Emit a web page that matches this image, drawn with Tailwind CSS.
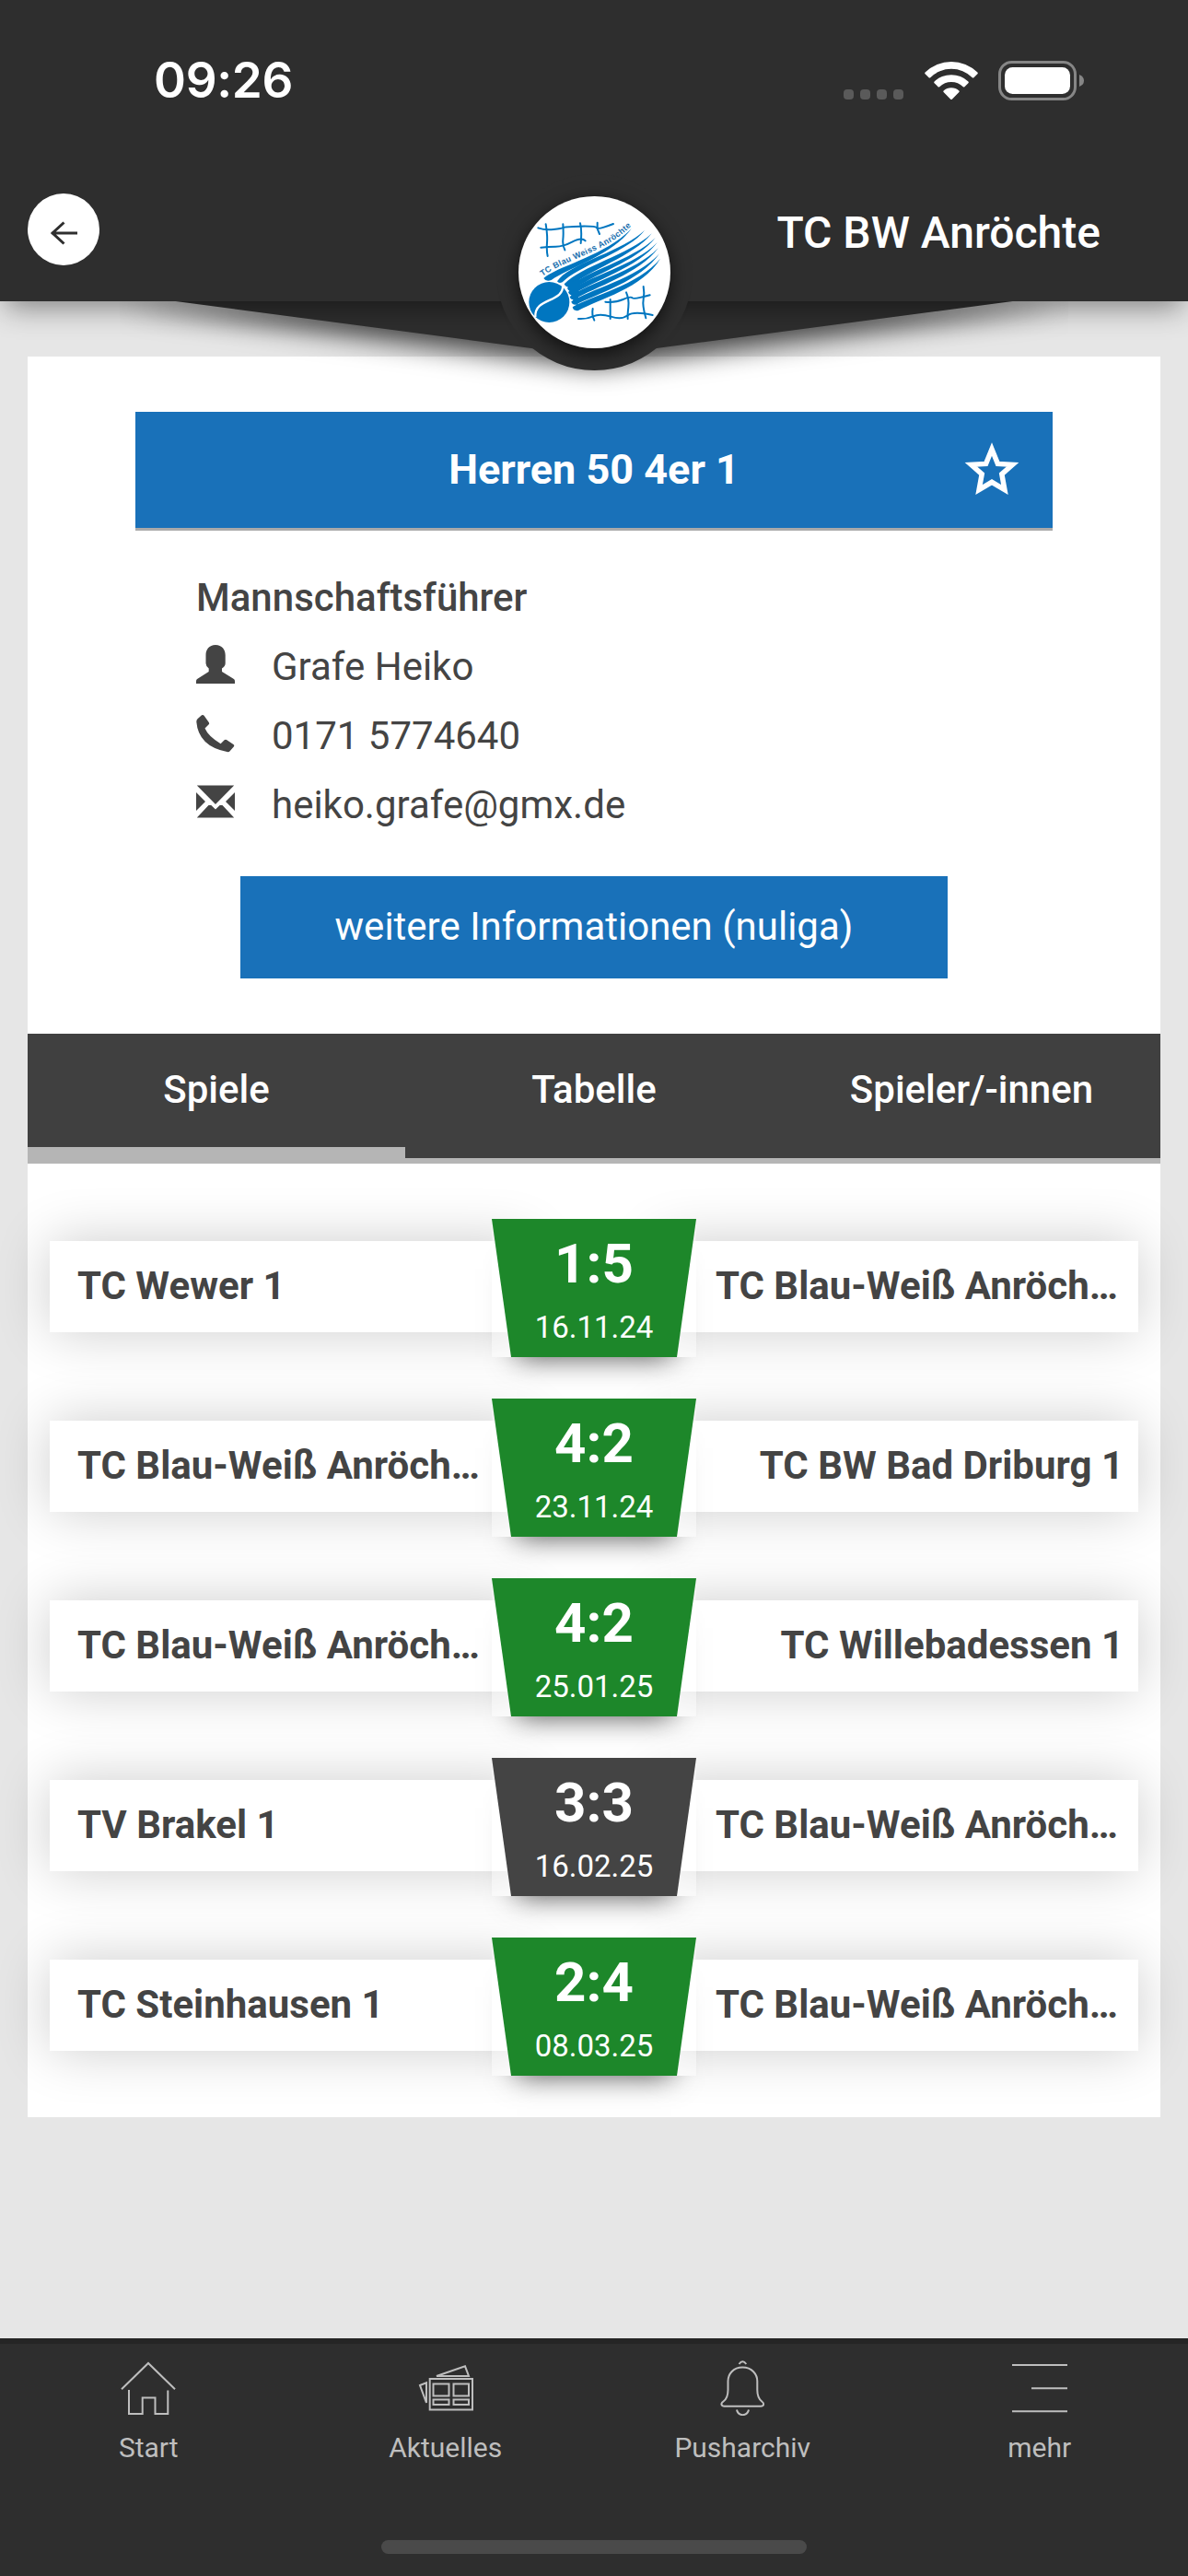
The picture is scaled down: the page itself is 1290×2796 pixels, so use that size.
<!DOCTYPE html>
<html lang="de">
<head>
  <meta charset="UTF-8" />
  <meta name="viewport" content="width=device-width, initial-scale=1.0"/>
  <title>TC BW Anröchte - Herren 50 4er 1</title>
  <script src="https://cdn.jsdelivr.net/npm/@tailwindcss/browser@4"></script>
</head>
<body class="w-[1290px] h-[2796px] overflow-hidden bg-[#e6e6e6] font-[Roboto,sans-serif] text-[42px] text-[#444444] flex flex-col">

  <!-- Header -->
  <div class="relative h-[327px] shrink-0 z-10">
    <svg class="absolute left-[130px] top-[310px] w-[1030px] h-[120px]" viewBox="130 310 1030 120">
      <polygon points="130,319 1160,319 645,387" fill="#2e2e2e" class="drop-shadow-[0_12px_14px_rgba(0,0,0,0.7)]"/>
    </svg>

    <header class="relative h-full bg-[#2e2e2e] shadow-[0_12px_30px_-6px_rgba(0,0,0,0.45)] text-white">
      <div class="h-[174px] pl-[167px] pr-[113px] flex items-center justify-between">
        <span class="font-[Inter,sans-serif] font-semibold text-[53px] leading-none tracking-[-0.3px]">09:26</span>
        <div class="flex items-center h-[43px]">
          <div class="flex gap-[7px] self-end mb-px mr-[23px]">
            <i class="size-[11px] rounded-[4px] bg-[#5a5a5a]"></i>
            <i class="size-[11px] rounded-[4px] bg-[#5a5a5a]"></i>
            <i class="size-[11px] rounded-[4px] bg-[#5a5a5a]"></i>
            <i class="size-[11px] rounded-[4px] bg-[#5a5a5a]"></i>
          </div>
          <svg class="w-[58px] h-[43px] mr-[22px]" viewBox="0 0 58 43" fill="#fff">
            <path d="M.6 12.6a40.5 40.5 0 0 1 56.8 0q.8.8 0 1.6l-4 4q-.8.8-1.6 0a32.300 32.300 0 0 0-45.600 0q-.8.8-1.600 0l-4-4q-.8-.8 0-1.600z"/>
            <path d="M10.600 22.600a26.500 26.500 0 0 1 36.800 0q.8.8 0 1.600l-4 4q-.8.8-1.600 0a18.500 18.500 0 0 0-25.600 0q-.8.8-1.600 0l-4-4q-.8-.8 0-1.600z"/>
            <path d="M20.600 32.400a12.500 12.500 0 0 1 16.800 0q.8.8 0 1.600l-7.600 7.700q-.8.8-1.600 0l-7.600-7.700q-.8-.8 0-1.600z"/>
          </svg>
          <svg class="w-[93px] h-[43px]" viewBox="0 0 93 43">
            <rect x="1.500" y="1.500" width="82" height="40" rx="13" fill="none" stroke="#868686" stroke-width="3"/>
            <rect x="7" y="7" width="71" height="29" rx="8.500" fill="#fff"/>
            <path d="M88 15q5 2 5 6.500t-5 6.500z" fill="#868686"/>
          </svg>
        </div>
      </div>
      <div class="mt-[35px] h-[84px] pl-[30px] pr-[95px] flex justify-between items-center">
        <div class="size-[78px] mb-1 rounded-full bg-white flex items-center justify-center">
          <svg class="size-[30px] mt-[7px] mr-px" viewBox="0 0 30 30" fill="none" stroke="#2e2e2e" stroke-width="3">
            <path d="M30 15H2M15.500 3.500 3 15l12.500 11.500"/>
          </svg>
        </div>
        <h1 class="font-medium text-[48px] leading-none mt-[3px]">TC BW Anröchte</h1>
      </div>
    </header>

    <!-- Club logo -->
    <div class="absolute left-[539px] top-[189px] size-[213px] rounded-full bg-[#2e2e2e] flex items-center justify-center">
      <svg class="size-[165px] rounded-full bg-white shadow-[0_6px_20px_0_rgba(0,0,0,0.65)]" viewBox="69 39 495 495">
        <g fill="none" stroke="#0076c0" stroke-width="6" stroke-linecap="round">
          <path d="M133 142Q155 150 183 147T215 141 270 137 325 142 378 129"/>
          <path d="M142 206Q165 203 190 203T245 187 287 184"/>
          <path d="M158 130Q164 165 162 190T164 234M214 130Q216 160 214 180T220 214M270 127Q276 150 272 192M326 125V145L333 162"/>
          <path d="M264 438Q290 440 312 430T370 431 425 427 506 426"/>
          <path d="M352 383Q385 386 410 375T440 370 497 361"/>
          <path d="M311 405Q307 425 316 443M368 375V438M420 352Q430 375 427 400T425 438M476 333Q480 355 476 375T484 436"/>
        </g>
        <!-- ball trail -->
        <g fill="#0076c0">
          <path d="M151 306C200 264 345 236 437 145C370 234 235 270 176 312Q158 318 151 306z"/>
          <path d="M195 316C235 256 400 224 480 150C425 222 265 264 212 319Q200 324 195 316z"/>
          <path d="M218 325C275 265 430 230 503 160C445 234 300 278 236 334Q222 336 218 325z"/>
          <path d="M228 338C285 283 440 248 515 174C455 252 305 295 243 347Q231 349 228 338z"/>
          <path d="M231 351C290 301 450 265 521 190C462 270 310 315 246 360Q234 362 231 351z"/>
          <path d="M236 366C295 321 450 285 524 208C465 291 315 336 251 375Q238 377 236 366z"/>
          <path d="M241 382C300 343 455 307 528 226C470 314 320 359 256 392Q243 393 241 382z"/>
          <path d="M245 400C305 363 460 329 531 242C475 338 330 374 264 411Q248 414 245 400z"/>
          <path d="M226 324L268 306 262 395 250 385z"/>
          <circle cx="169" cy="384" r="66"/>
        </g>
        <path d="M213 322C222 390 120 365 124 432" fill="none" stroke="#fff" stroke-width="7"/>
        <path id="arc" d="M147 300C240 235 350 225 442 130" fill="none"/>
        <text class="font-[Liberation_Sans,sans-serif] font-bold" font-size="27" fill="#1a6fae"><textPath href="#arc" textLength="334">TC Blau Weiss Anröchte</textPath></text>
      </svg>
    </div>
  </div>

  <!-- Team card -->
  <main class="mx-[30px] mt-[60px] h-[1911px] shrink-0 bg-white pt-[60px]">
    <div class="mx-[117px] h-[129px] bg-[#1971b9] border-b-3 border-[#aaaaaa] text-white flex items-center justify-center relative">
      <h2 class="font-bold text-[45px] leading-none -mt-[2px]">Herren 50 4er 1</h2>
      <svg class="absolute right-[36px] top-[33px] size-[60px]" viewBox="0 0 60 60" fill="none" stroke="#fff" stroke-width="5.500">
        <path d="M30 7.500 36.400 23.400 52.500 24.300 40.800 34.600 43.900 51.500 30 43.300 16.100 51.500 19.200 34.600 7.500 24.300 23.600 23.400z"/>
      </svg>
    </div>

    <div class="mt-[35px] ml-[183px] leading-[75px]">
      <h3 class="font-medium">Mannschaftsführer</h3>
      <div class="flex items-center gap-[40px]">
        <svg class="size-[42px] -mt-[6px]" viewBox="0 0 42 42" fill="#444">
          <path d="M21 0C28 0 31.700 5 31.700 11v9q0 3-3.700 5.500v3.500l12.500 7.700Q42 37.500 42 39v3H0v-3q0-1.500 1.500-2.300L13.700 29v-3.500Q10.500 23 10.500 20v-9C10.500 5 14 0 21 0z"/>
        </svg>
        <span>Grafe Heiko</span>
      </div>
      <div class="flex items-center gap-[40px]">
        <svg class="size-[42px] -mt-[6px]" viewBox="0 0 42 42" fill="#444">
          <path d="M6 1.300Q7.500.3 8.600 1.700l5.300 7.500q.8 1.300-.4 2.400L9.500 15.500Q13 24 26.600 32.200l4-4q1.200-1 2.400-.2l7.500 5q1.400 1 .5 2.300l-4.400 5Q35.500 41.500 33.500 41 2.500 35 .3 8.500.2 6.500 1.500 5.200z"/>
        </svg>
        <span>0171 5774640</span>
      </div>
      <div class="flex items-center gap-[40px]">
        <svg class="size-[42px] -mt-[7px]" viewBox="0 0 42 42" fill="#444">
          <path d="M.8 3.500h40.400L21 24zM0 11l10 10L0 31zM42 11 32 21l10 10zM.8 38.500 13.500 25l2.800 0L21 29.500l4.700-4.500h2.800l12.700 13.500z"/>
        </svg>
        <span>heiko.grafe@gmx.de</span>
      </div>
    </div>

    <a class="mt-[40px] mx-auto w-[768px] h-[111px] pb-[2px] bg-[#1971b9] text-white flex items-center justify-center">weitere Informationen (nuliga)</a>

    <!-- Tabs -->
    <div class="mt-[60px] h-[141px] grid grid-cols-3 bg-[#404040] border-b-6 border-[#b5b5b5] text-white font-medium text-center leading-[122px]">
      <div class="border-b-12 border-[#b5b5b5]">Spiele</div>
      <div>Tabelle</div>
      <div>Spieler/-innen</div>
    </div>

    <!-- Matches -->
    <div id="matches" class="mt-[60px] mx-6 flex flex-col gap-[45px]"></div>
  </main>

  <!-- Bottom navigation -->
  <nav class="mt-auto h-[258px] shrink-0 bg-[#2e2e2e] border-t-6 border-[#252525] text-[#bebebe] text-[30px] leading-none flex flex-col">
    <div class="grid grid-cols-4 pt-[18px]">
      <div class="flex flex-col items-center gap-5">
        <svg class="size-[60px]" viewBox="0 0 60 60" fill="none" stroke="#bebebe" stroke-width="2">
          <path d="M1 31.300 30 3 59 31.300M9 32V58H23.700V40.500H37.500V58H51.300V32.500"/>
        </svg>
        <span>Start</span>
      </div>
      <div class="flex flex-col items-center gap-5">
        <svg class="size-[60px]" viewBox="0 0 60 60" fill="none" stroke="#bebebe" stroke-width="2">
          <path d="M12.700 20H59V53.500H12.700zM16.500 25.500H33.500V38.500H16.500zM38.500 25.500H55V38.500H38.500zM16.500 42.500H33.500V48H16.500zM38.500 42.500H55V48H38.500z"/>
          <path d="M20 17 51 6.300 55 17zM2 27 9 24.300V46z"/>
        </svg>
        <span>Aktuelles</span>
      </div>
      <div class="flex flex-col items-center gap-5">
        <svg class="size-[60px]" viewBox="0 0 60 60" fill="none" stroke="#bebebe" stroke-width="2">
          <path d="M26.500 4Q30.300-1.500 34.300 4M24 53.500C25.500 61 35.500 61 37 53.500"/>
          <path d="M30.300 7.600C20 7.600 14.500 15 14.500 22.500V32C14.500 38 13 42 9.500 44.500 6 47 7.300 49.800 10.500 49.800H50C53.500 49.800 54.500 47 51.200 44.500 48 42 46.300 38 46.300 32V22.500C46.300 15 40.500 7.600 30.300 7.600z"/>
        </svg>
        <span>Pusharchiv</span>
      </div>
      <div class="flex flex-col items-center gap-5">
        <svg class="size-[60px]" viewBox="0 0 60 60" fill="none" stroke="#bebebe" stroke-width="2">
          <path d="M0 5H60M21 30.300H60M0 55.300H60"/>
        </svg>
        <span>mehr</span>
      </div>
    </div>
    <div class="mt-auto mb-6 mx-auto w-[462px] h-[15px] rounded-full bg-[#4a4a4a]"></div>
  </nav>

  <script>
    const matches = [
      { home: "TC Wewer 1", away: "TC Blau-Weiß Anröchte 1", score: "1:5", date: "16.11.24" },
      { home: "TC Blau-Weiß Anröchte 1", away: "TC BW Bad Driburg 1", score: "4:2", date: "23.11.24" },
      { home: "TC Blau-Weiß Anröchte 1", away: "TC Willebadessen 1", score: "4:2", date: "25.01.25" },
      { home: "TV Brakel 1", away: "TC Blau-Weiß Anröchte 1", score: "3:3", date: "16.02.25", draw: true },
      { home: "TC Steinhausen 1", away: "TC Blau-Weiß Anröchte 1", score: "2:4", date: "08.03.25" },
    ];

    document.getElementById("matches").innerHTML = matches.map(m => `
      <div class="h-[150px] flex items-start">
        <div class="mt-6 w-[520px] h-[99px] pl-[30px] pb-[2px] bg-white shadow-[0_0_60px_rgba(0,0,0,0.2)] flex items-center font-bold">
          <span class="w-[445px] shrink-0 truncate">${m.home}</span>
        </div>
        <div class="relative w-[222px] h-[150px] -mx-[40px] shrink-0 bg-white/30 shadow-[0_27px_30px_-27px_rgba(0,0,0,0.7)]">
          <div class="h-full [clip-path:polygon(0_0,100%_0,201px_100%,21px_100%)] ${m.draw ? 'bg-[#444444]' : 'bg-[#1d872a]'} text-white text-center">
            <p class="pt-[19px] text-[60px] leading-[60px] font-bold">${m.score}</p>
            <p class="mt-[21px] text-[33px] leading-[36px]">${m.date}</p>
          </div>
        </div>
        <div class="mt-6 w-[520px] h-[99px] pr-[16px] pb-[2px] bg-white shadow-[0_0_60px_rgba(0,0,0,0.2)] flex items-center justify-end font-bold">
          <span class="w-[443px] shrink-0 truncate text-right">${m.away}</span>
        </div>
      </div>`).join("");
  </script>
</body>
</html>
